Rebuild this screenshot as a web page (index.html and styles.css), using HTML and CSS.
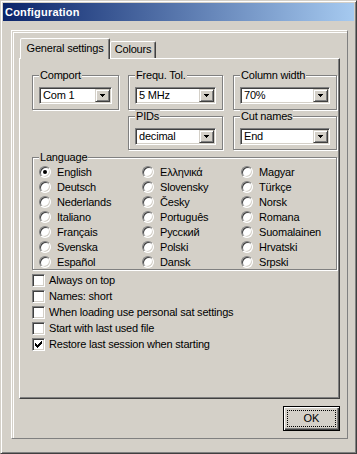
FILE: index.html
```html
<!DOCTYPE html>
<html lang="en">
<head>
    <meta charset="UTF-8">
    <title>Configuration</title>
    <link rel="stylesheet" href="styles.css">
</head>
<body>
    <div class="window">
        <div class="titlebar">Configuration</div>

        <div class="frame">
            <div class="tabs">
                <div class="tab active">General settings</div>
                <div class="tab">Colours</div>
            </div>

            <div class="page">
                <div class="groups">
                    <fieldset class="group">
                        <legend>Comport</legend>
                        <div class="combo"><span class="value">Com 1</span><span class="drop"><svg width="5" height="3" viewBox="0 0 5 3"><path d="M0 0h5v1h-1v1h-1v1h-1v-1h-1v-1h-1z"/></svg></span></div>
                    </fieldset>
                    <fieldset class="group mid">
                        <legend>Frequ. Tol.</legend>
                        <div class="combo"><span class="value">5 MHz</span><span class="drop"><svg width="5" height="3" viewBox="0 0 5 3"><path d="M0 0h5v1h-1v1h-1v1h-1v-1h-1v-1h-1z"/></svg></span></div>
                    </fieldset>
                    <fieldset class="group">
                        <legend>Column width</legend>
                        <div class="combo"><span class="value">70%</span><span class="drop"><svg width="5" height="3" viewBox="0 0 5 3"><path d="M0 0h5v1h-1v1h-1v1h-1v-1h-1v-1h-1z"/></svg></span></div>
                    </fieldset>
                    <fieldset class="group mid second">
                        <legend>PIDs</legend>
                        <div class="combo"><span class="value">decimal</span><span class="drop"><svg width="5" height="3" viewBox="0 0 5 3"><path d="M0 0h5v1h-1v1h-1v1h-1v-1h-1v-1h-1z"/></svg></span></div>
                    </fieldset>
                    <fieldset class="group second">
                        <legend>Cut names</legend>
                        <div class="combo"><span class="value">End</span><span class="drop"><svg width="5" height="3" viewBox="0 0 5 3"><path d="M0 0h5v1h-1v1h-1v1h-1v-1h-1v-1h-1z"/></svg></span></div>
                    </fieldset>
                </div>

                <fieldset class="group language">
                    <legend>Language</legend>
                    <div class="radios">
                        <div class="opt"><span class="radio on"></span>English</div>
                        <div class="opt"><span class="radio"></span>Deutsch</div>
                        <div class="opt"><span class="radio"></span>Nederlands</div>
                        <div class="opt"><span class="radio"></span>Italiano</div>
                        <div class="opt"><span class="radio"></span>Français</div>
                        <div class="opt"><span class="radio"></span>Svenska</div>
                        <div class="opt"><span class="radio"></span>Español</div>
                        <div class="opt"><span class="radio"></span>Ελληνικά</div>
                        <div class="opt"><span class="radio"></span>Slovensky</div>
                        <div class="opt"><span class="radio"></span>Česky</div>
                        <div class="opt"><span class="radio"></span>Português</div>
                        <div class="opt"><span class="radio"></span>Русский</div>
                        <div class="opt"><span class="radio"></span>Polski</div>
                        <div class="opt"><span class="radio"></span>Dansk</div>
                        <div class="opt"><span class="radio"></span>Magyar</div>
                        <div class="opt"><span class="radio"></span>Türkçe</div>
                        <div class="opt"><span class="radio"></span>Norsk</div>
                        <div class="opt"><span class="radio"></span>Romana</div>
                        <div class="opt"><span class="radio"></span>Suomalainen</div>
                        <div class="opt"><span class="radio"></span>Hrvatski</div>
                        <div class="opt"><span class="radio"></span>Srpski</div>
                    </div>
                </fieldset>

                <div class="checks">
                    <div class="opt"><span class="check"></span>Always on top</div>
                    <div class="opt"><span class="check"></span>Names: short</div>
                    <div class="opt"><span class="check"></span>When loading use personal sat settings</div>
                    <div class="opt"><span class="check"></span>Start with last used file</div>
                    <div class="opt"><span class="check"><svg width="7" height="7" viewBox="0 0 7 7"><path d="M0 2h1v1h1v1h1v-1h1v-1h1v-1h1v-1h1v3h-1v1h-1v1h-1v1h-1v1h-1v-1h-1v-1h-1z"/></svg></span>Restore last session when starting</div>
                </div>
            </div>

            <div class="buttons">
                <button class="btn default"><span class="focus">OK</span></button>
            </div>
        </div>
    </div>
</body>
</html>
```

FILE: styles.css
```css
body {
    margin: 0;
    font-family: "Liberation Sans", Arial, sans-serif;
    font-size: 11px;
    letter-spacing: -0.2px;
    color: #000;
    background: #d4d0c8;
}

/* ventana clasica */
.window {
    width: 357px;
    height: 454px;
    box-sizing: border-box;
    background: #d4d0c8;
    border: 1px solid;
    border-color: #d4d0c8 #404040 #404040 #d4d0c8;
    box-shadow: inset 1px 1px #fff, inset -1px -1px #808080;
    padding: 2px;
}

.titlebar {
    height: 18px;
    line-height: 18px;
    padding-left: 2px;
    color: #fff;
    font-weight: bold;
    letter-spacing: 0.2px;
    background: linear-gradient(to right, #0a246a, #a6caf0);
}

.frame {
    width: 337px;
    height: 409px;
    box-sizing: border-box;
    margin: 9px 0 0 8px;
    padding: 7px 7px 0 7px;
    border: 1px solid;
    border-color: #fff #808080 #808080 #fff;
    box-shadow: inset 1px 1px #d4d0c8, inset 2px 2px #fff;
}

/* pestañas */
.tabs {
    display: flex;
    align-items: flex-end;
    height: 20px;
    padding-left: 1px;
}

.tab {
    box-sizing: border-box;
    height: 17px;
    padding-top: 1px;
    line-height: 13px;
    text-align: center;
    background: #d4d0c8;
    border: 1px solid;
    border-bottom: 0;
    border-color: #fff #404040 transparent #fff;
    border-radius: 2px 2px 0 0;
    box-shadow: inset -1px 0 #808080;
    width: 46px;
}

.tab.active {
    width: 90px;
    height: 21px;
    padding-top: 3px;
    margin-bottom: -1px;
    position: relative;
    z-index: 1;
}

.page {
    height: 341px;
    box-sizing: border-box;
    border: 1px solid;
    border-color: #fff #404040 #404040 #fff;
    box-shadow: inset -1px -1px #808080;
    padding: 10px 2px 0 12px;
}

/* grupos */
.groups {
    display: grid;
    grid-template-columns: 87px 96px 104px;
    column-gap: 9px;
}

.group {
    margin: 0;
    min-width: 0;
    padding: 5px 6px 5px 6px;
    border: 1px solid #808080;
    box-shadow: 1px 1px 0 #fff, inset 1px 1px 0 #fff;
}

.group legend {
    padding: 0 1px;
    line-height: 13px;
    background: #d4d0c8;
}

.group.mid {
    width: 95px;
    box-sizing: border-box;
}

.group.second {
    padding-bottom: 4px;
}

.group.mid.second {
    grid-column: 2;
}

.combo {
    display: flex;
    height: 17px;
    box-sizing: border-box;
    padding: 1px;
    background: #fff;
    border: 1px solid;
    border-color: #808080 #fff #fff #808080;
    box-shadow: inset 1px 1px #404040, inset -1px -1px #d4d0c8;
}

.combo .value {
    flex: 1;
    padding-left: 2px;
    line-height: 13px;
}

.combo .drop {
    width: 15px;
    box-sizing: border-box;
    display: flex;
    align-items: center;
    justify-content: center;
    background: #d4d0c8;
    border: 1px solid;
    border-color: #d4d0c8 #404040 #404040 #d4d0c8;
    box-shadow: inset 1px 1px #fff, inset -1px -1px #808080;
}

.drop svg {
    display: block;
    shape-rendering: crispEdges;
}

.language {
    margin-top: 1px;
    padding: 0 0 0 6px;
}

.radios {
    display: grid;
    grid-template-columns: 103px 99px 1fr;
    grid-template-rows: repeat(7, 15px);
    grid-auto-flow: column;
}

.opt {
    display: flex;
    align-items: center;
    white-space: nowrap;
}

.radio {
    width: 12px;
    height: 12px;
    box-sizing: border-box;
    margin-right: 6px;
    border-radius: 50%;
    background: #fff;
    border: 1px solid;
    border-color: #808080 #fff #fff #808080;
    box-shadow: inset 1px 1px #404040, inset -1px -1px #d4d0c8;
}

.radio.on::after {
    content: "";
    display: block;
    width: 4px;
    height: 4px;
    margin: 3px;
    border-radius: 50%;
    background: #000;
}

.checks {
    margin-top: 2px;
}

.checks .opt {
    height: 16px;
}

.check {
    width: 13px;
    height: 13px;
    box-sizing: border-box;
    margin-right: 4px;
    padding: 2px;
    background: #fff;
    border: 1px solid;
    border-color: #808080 #fff #fff #808080;
    box-shadow: inset 1px 1px #404040, inset -1px -1px #d4d0c8;
}

.check svg {
    display: block;
    shape-rendering: crispEdges;
}

/* boton OK */
.buttons {
    display: flex;
    justify-content: flex-end;
    margin-top: 7px;
}

.btn {
    width: 57px;
    height: 25px;
    padding: 3px;
    font: inherit;
    background: #d4d0c8;
    border: 1px solid #000;
    box-shadow: inset 1px 1px #fff, inset -1px -1px #404040, inset -2px -2px #808080;
}

.btn .focus {
    display: block;
    height: 100%;
    box-sizing: border-box;
    border: 1px dotted #000;
    line-height: 15px;
}
```
